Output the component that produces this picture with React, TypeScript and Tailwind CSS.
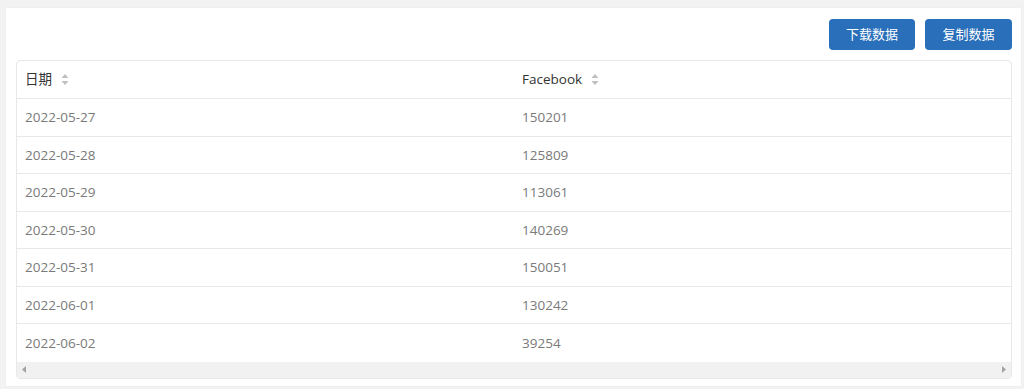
import React from "react";

const rows: [string, string][] = [
  ["2022-05-27", "150201"],
  ["2022-05-28", "125809"],
  ["2022-05-29", "113061"],
  ["2022-05-30", "140269"],
  ["2022-05-31", "150051"],
  ["2022-06-01", "130242"],
  ["2022-06-02", "39254"],
];

const SortIcon: React.FC = () => (
  <svg width="8" height="13" viewBox="0 0 8 13" className="ml-[9px] text-[#bfbfbf]">
    <path d="M4 1 L7.5 5 L0.5 5 Z" fill="currentColor" />
    <path d="M4 12 L7.5 8 L0.5 8 Z" fill="currentColor" />
  </svg>
);

const App: React.FC = () => {
  return (
    <div
      className="w-[1024px] h-[389px] bg-[#f2f2f2] pt-[8px] pl-[6px] pr-[3px] pb-[3px]"
      style={{ fontFamily: '"Open Sans", "Noto Sans CJK SC", sans-serif' }}
    >
      <div className="h-full bg-white pt-[11px] pl-[10px] pr-[9px] shadow-[0_0_1px_rgba(0,0,0,0.08)]">
        <div className="flex justify-end gap-[10px]">
          <button className="w-[86px] h-[31px] rounded-[4px] bg-[#2a6fba] text-white text-[13px]">
            下载数据
          </button>
          <button className="w-[87px] h-[31px] rounded-[4px] bg-[#2a6fba] text-white text-[13px]">
            复制数据
          </button>
        </div>

        <div className="mt-[10px] border border-[#e8e8e8] rounded-[4px] overflow-hidden">
          <div className="grid grid-cols-2 h-[38px] border-b border-[#e8e8e8] text-[13.5px] text-[#333]">
            <div className="flex items-center pl-[8px]">
              日期
              <SortIcon />
            </div>
            <div className="flex items-center pl-[8px]">
              Facebook
              <SortIcon />
            </div>
          </div>
          {rows.map(([date, value], i) => (
            <div
              key={date}
              className={`grid grid-cols-2 h-[37.5px] text-[13.5px] text-[#7a7a7a] ${
                i < rows.length - 1 ? "border-b border-[#e8e8e8]" : ""
              }`}
            >
              <div className="flex items-center pl-[8px]">{date}</div>
              <div className="flex items-center pl-[8px]">{value}</div>
            </div>
          ))}
          <div className="h-[16px] bg-[#f1f1f1] flex items-center justify-between px-[5px]">
            <svg width="5" height="7" viewBox="0 0 5 7">
              <path d="M0 3.5 L4 0 L4 7 Z" fill="#a3a3a3" />
            </svg>
            <svg width="5" height="7" viewBox="0 0 5 7">
              <path d="M5 3.5 L1 0 L1 7 Z" fill="#a3a3a3" />
            </svg>
          </div>
        </div>
      </div>
    </div>
  );
};

export default App;
